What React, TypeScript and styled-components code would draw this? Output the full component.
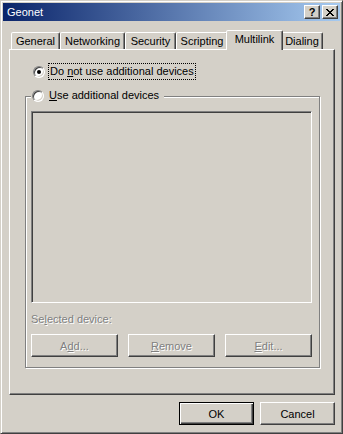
import React from 'react';
import styled, { createGlobalStyle, css } from 'styled-components';

const FACE = '#D4D0C8';
const SHADOW = '#808080';
const DARK = '#404040';
const HI = '#FFFFFF';
const FONT = '"Liberation Sans", Arial, sans-serif';

const Global = createGlobalStyle`
  html, body { margin: 0; padding: 0; background: ${FACE}; }
  body { font-family: ${FONT}; font-size: 11px; color: #000; }
  * { box-sizing: border-box; }
`;

const Window = styled.div`
  width: 343px;
  height: 434px;
  background: ${FACE};
  border: 1px solid;
  border-color: ${FACE} ${DARK} ${DARK} ${FACE};
  box-shadow: inset 1px 1px ${HI}, inset -1px -1px ${SHADOW};
  padding: 2px;
  display: flex;
  flex-direction: column;
`;

const TitleBar = styled.div`
  height: 18px;
  flex: none;
  display: flex;
  align-items: center;
  padding: 0 2px 0 4px;
  background: linear-gradient(to right, #0a246a, #a6caf0);
  color: #fff;
`;

const Title = styled.span`
  flex: 1;
  font-size: 11px;
  line-height: 13px;
`;

const CaptionButtons = styled.div`
  display: flex;
  gap: 2px;
`;

const CaptionButton = styled.button`
  width: 16px;
  height: 14px;
  padding: 0;
  margin: 0;
  background: ${FACE};
  border: 1px solid;
  border-color: ${HI} ${DARK} ${DARK} ${HI};
  box-shadow: inset -1px -1px ${SHADOW};
  display: flex;
  align-items: center;
  justify-content: center;
  font: bold 11px ${FONT};
  line-height: 11px;
  color: #000;
`;

const Body = styled.div`
  flex: 1;
  display: flex;
  flex-direction: column;
  padding: 9px 5px 0 6px;
`;

const TabStrip = styled.div`
  display: flex;
  align-items: flex-end;
  height: 19px;
  padding-left: 2px;
  position: relative;
  z-index: 1;
`;

const Tab = styled.div<{ $w: number; $active?: boolean }>`
  width: ${(p) => p.$w}px;
  height: 17px;
  flex: none;
  display: flex;
  align-items: center;
  justify-content: center;
  background: ${FACE};
  border: 1px solid;
  border-bottom: none;
  border-color: ${HI} ${DARK} transparent ${HI};
  border-radius: 2px 2px 0 0;
  box-shadow: inset -1px 0 ${SHADOW};
  white-space: nowrap;
  line-height: 13px;
  ${(p) =>
    p.$active &&
    css`
      width: ${p.$w + 4}px;
      height: 20px;
      margin: 0 -2px -1px;
      padding-bottom: 3px;
      position: relative;
      z-index: 2;
    `}
`;

const Panel = styled.div`
  height: 346px;
  background: ${FACE};
  border: 1px solid;
  border-color: ${HI} ${DARK} ${DARK} ${HI};
  box-shadow: inset -1px -1px ${SHADOW};
  padding: 13px 0 0 15px;
  display: flex;
  flex-direction: column;
  align-items: flex-start;
`;

const OptionRow = styled.label`
  display: flex;
  align-items: center;
  gap: 3px;
  margin-left: 8px;
  height: 17px;
`;

const RadioMark = styled.span<{ $checked?: boolean }>`
  width: 12px;
  height: 12px;
  flex: none;
  border-radius: 50%;
  position: relative;
  background: ${HI};
  border: 1px solid;
  border-color: ${SHADOW} ${HI} ${HI} ${SHADOW};
  box-shadow: inset 1px 1px ${DARK}, inset -1px -1px ${FACE};
  ${(p) =>
    p.$checked &&
    css`
      &::after {
        content: '';
        position: absolute;
        left: 3px;
        top: 3px;
        width: 4px;
        height: 4px;
        border-radius: 50%;
        background: #000;
      }
    `}
`;

const FocusLabel = styled.span`
  border: 1px dotted #000;
  padding: 0 1px;
  line-height: 15px;
  white-space: nowrap;
`;

const GroupBox = styled.div`
  margin-top: 16px;
  width: 295px;
  border: 1px solid ${SHADOW};
  box-shadow: inset 1px 1px ${HI}, 1px 1px ${HI};
  padding: 0 7px 10px 5px;
  display: flex;
  flex-direction: column;
`;

const GroupLegend = styled.label`
  align-self: flex-start;
  display: flex;
  align-items: center;
  gap: 5px;
  height: 13px;
  margin-top: -8px;
  padding: 0 5px 0 1px;
  background: ${FACE};
  line-height: 13px;
  white-space: nowrap;
`;

const ListBox = styled.div`
  margin-top: 9px;
  width: 281px;
  height: 192px;
  background: ${FACE};
  border: 1px solid;
  border-color: ${SHADOW} ${HI} ${HI} ${SHADOW};
  box-shadow: inset 1px 1px ${DARK}, inset -1px -1px ${FACE};
`;

const DisabledText = styled.div`
  margin-top: 10px;
  line-height: 13px;
  color: ${SHADOW};
  text-shadow: 1px 1px ${HI};
`;

const ButtonRow = styled.div`
  margin-top: 8px;
  width: 281px;
  display: flex;
  justify-content: space-between;
`;

const PushButton = styled.button<{ $w: number; $default?: boolean }>`
  width: ${(p) => p.$w}px;
  height: 23px;
  padding: 0;
  margin: 0;
  background: ${FACE};
  font: 11px ${FONT};
  color: #000;
  border: 1px solid;
  border-color: ${HI} ${DARK} ${DARK} ${HI};
  box-shadow: inset -1px -1px ${SHADOW}, inset 1px 1px ${FACE};
  &:disabled {
    color: ${SHADOW};
    text-shadow: 1px 1px ${HI};
  }
  ${(p) =>
    p.$default &&
    css`
      border-color: #000;
      box-shadow: inset 1px 1px ${HI}, inset -1px -1px ${DARK}, inset -2px -2px ${SHADOW};
    `}
`;

const Footer = styled.div`
  display: flex;
  justify-content: flex-end;
  gap: 6px;
  margin-top: 7px;
`;

const CloseGlyph = () => (
  <svg width="8" height="7" viewBox="0 0 8 7" shapeRendering="crispEdges">
    <path
      fill="#000"
      d="M0 0h2v1H0zM6 0h2v1H6zM1 1h2v1H1zM5 1h2v1H5zM2 2h4v1H2zM3 3h2v1H3zM2 4h4v1H2zM1 5h2v1H1zM5 5h2v1H5zM0 6h2v1H0zM6 6h2v1H6z"
    />
  </svg>
);

const tabs: { label: string; w: number; active?: boolean }[] = [
  { label: 'General', w: 49 },
  { label: 'Networking', w: 65 },
  { label: 'Security', w: 51 },
  { label: 'Scripting', w: 52 },
  { label: 'Multilink', w: 53, active: true },
  { label: 'Dialing', w: 42 },
];

export default function App() {
  return (
    <>
      <Global />
      <Window>
        <TitleBar>
          <Title>Geonet</Title>
          <CaptionButtons>
            <CaptionButton aria-label="Help">?</CaptionButton>
            <CaptionButton aria-label="Close">
              <CloseGlyph />
            </CaptionButton>
          </CaptionButtons>
        </TitleBar>
        <Body>
          <TabStrip>
            {tabs.map((t) => (
              <Tab key={t.label} $w={t.w} $active={t.active}>
                {t.label}
              </Tab>
            ))}
          </TabStrip>
          <Panel>
            <OptionRow>
              <RadioMark $checked />
              <FocusLabel>
                Do <u>n</u>ot use additional devices
              </FocusLabel>
            </OptionRow>
            <GroupBox>
              <GroupLegend>
                <RadioMark />
                <span>
                  <u>U</u>se additional devices
                </span>
              </GroupLegend>
              <ListBox />
              <DisabledText>
                Se<u>l</u>ected device:
              </DisabledText>
              <ButtonRow>
                <PushButton $w={87} disabled>
                  A<u>d</u>d...
                </PushButton>
                <PushButton $w={87} disabled>
                  <u>R</u>emove
                </PushButton>
                <PushButton $w={87} disabled>
                  <u>E</u>dit...
                </PushButton>
              </ButtonRow>
            </GroupBox>
          </Panel>
          <Footer>
            <PushButton $w={75} $default>
              OK
            </PushButton>
            <PushButton $w={75}>Cancel</PushButton>
          </Footer>
        </Body>
      </Window>
    </>
  );
}
